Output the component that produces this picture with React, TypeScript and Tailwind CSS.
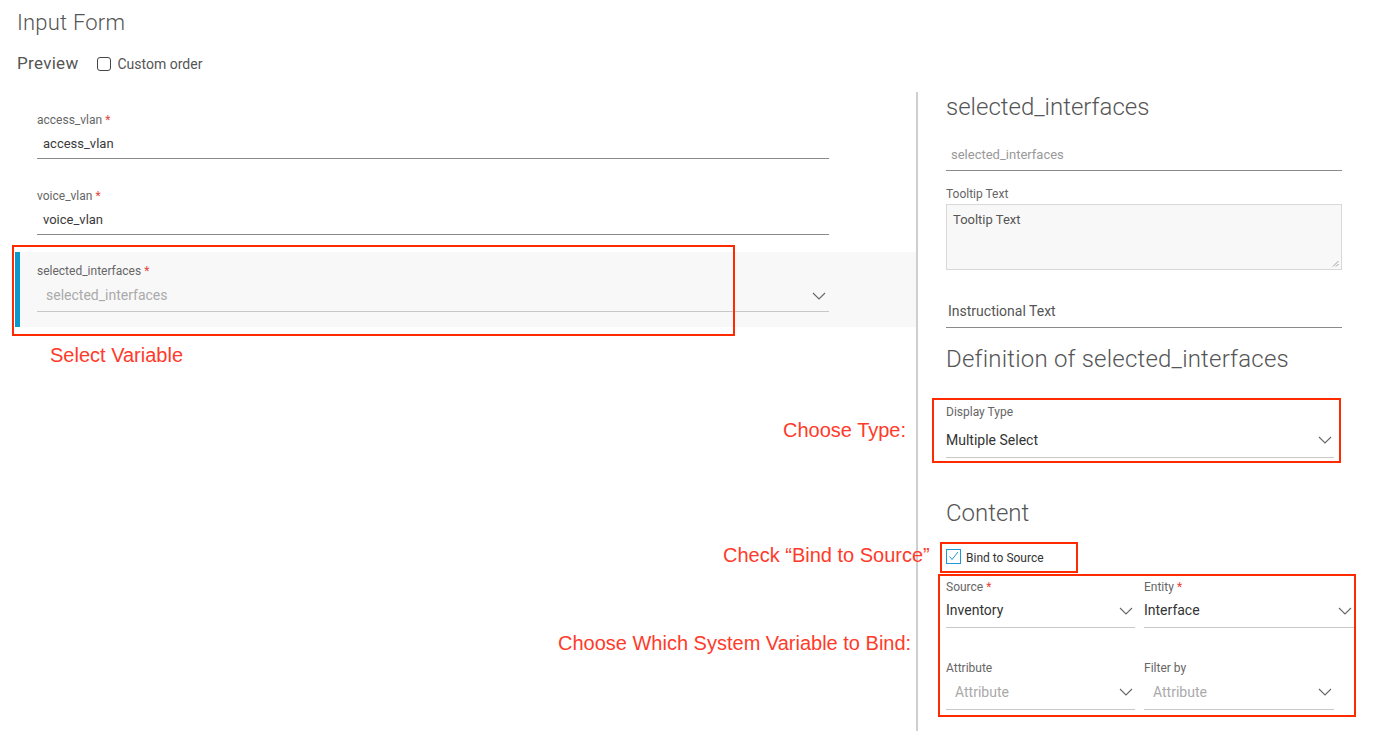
import React from "react";

const Chevron = () => (
  <svg width="14" height="8" viewBox="0 0 14 8" fill="none">
    <polyline points="1,1 7,7 13,1" stroke="#666" strokeWidth="1.1" />
  </svg>
);

const Req = () => <span className="text-[#e2453c] ml-[3px]">*</span>;

function LeftField({ label, value, placeholder, select, selected }: { label: string; value?: string; placeholder?: string; select?: boolean; selected?: boolean }) {
  return (
    <div className="flex pl-[15px]">
      <div className={`flex-1 flex ${selected ? "bg-[#f8f8f8]" : ""}`}>
        <div className={`w-[5px] ${selected ? "bg-[#0d98cc]" : ""}`} />
        <div className={`pl-[17px] pr-[87px] pt-[12px] flex-1 ${select ? "pb-[15px]" : "pb-[17px]"}`}>
          <div className="h-[14px] flex items-center text-[12px] text-[#666]">
            {label}
            <Req />
          </div>
          <div className={`mt-[2px] flex items-center justify-between border-b ${select ? "h-[32px] border-[#c8c8c8] pl-[9px]" : "h-[30px] border-[#8a8a8a] pl-[6px]"} pr-[3px]`}>
            <span className={value ? "text-[13px] text-[#3a3a3a]" : "text-[14px] text-[#aaa]"}>{value ?? placeholder}</span>
            {select && <Chevron />}
          </div>
        </div>
      </div>
    </div>
  );
}

function SelectField({ label, req, value, placeholder, width, box }: { label: string; req?: boolean; value?: string; placeholder?: string; width: string; box: string }) {
  return (
    <div className={width}>
      <div className="h-[14px] flex items-center text-[12px] text-[#666]">
        {label}
        {req && <Req />}
      </div>
      <div className={`${box} flex items-center justify-between border-b border-[#c8c8c8] pr-[2px] ${value ? "" : "pl-[9px]"}`}>
        <span className={`text-[14px] ${value ? "text-[#333]" : "text-[#aaa]"}`}>{value ?? placeholder}</span>
        <Chevron />
      </div>
    </div>
  );
}

const redFont = { fontFamily: "'Liberation Sans', Arial, sans-serif" };

export default function App() {
  return (
    <div className="relative w-[1383px] h-[731px] bg-white overflow-hidden" style={{ fontFamily: "Roboto, 'Liberation Sans', sans-serif" }}>
      {/* header */}
      <div className="pl-[17px]">
        <div className="pt-[8px] h-[36px] flex items-center text-[22px] tracking-[0.2px] font-light text-[#555]">Input Form</div>
        <div className="mt-[18px] h-[20px] flex items-center">
          <span className="text-[17px] tracking-[0.3px] text-[#555]">Preview</span>
          <span className="ml-[18px] w-[14px] h-[14px] rounded-[3px] border border-[#444]" />
          <span className="ml-[7px] text-[14px] text-[#555]">Custom order</span>
        </div>
      </div>

      <div className="flex mt-[18px] h-[639px]">
        {/* left */}
        <div className="w-[916px] pt-[9px]">
          <LeftField label="access_vlan" value="access_vlan" />
          <div className="h-[1px]" />
          <LeftField label="voice_vlan" value="voice_vlan" />
          <LeftField label="selected_interfaces" placeholder="selected_interfaces" select selected />
        </div>
        <div className="w-[2px] bg-[#cfcfcf]" />
        {/* right */}
        <div className="flex-1 pl-[28px]">
          <div className="mt-[1px] h-[28px] flex items-center text-[24px] font-light text-[#555]">selected_interfaces</div>
          <div className="mt-[19px] w-[396px] h-[31px] flex items-center border-b border-[#8a8a8a] pl-[5px]">
            <span className="text-[13px] text-[#999]">selected_interfaces</span>
          </div>
          <div className="mt-[16px] h-[14px] flex items-center text-[12px] text-[#666]">Tooltip Text</div>
          <div className="relative mt-[3px] w-[396px] h-[66px] bg-[#f8f8f8] border border-[#d8d8d8] px-[6px] pt-[5px] text-[13px] text-[#555]">
            Tooltip Text
            <svg className="absolute right-[2px] bottom-[2px]" width="7" height="7" viewBox="0 0 7 7">
              <line x1="1" y1="6.5" x2="6.5" y2="1" stroke="#888" strokeWidth="0.8" />
              <line x1="4" y1="6.5" x2="6.5" y2="4" stroke="#888" strokeWidth="0.8" />
            </svg>
          </div>
          <div className="mt-[26px] w-[396px] h-[32px] flex items-center border-b border-[#8a8a8a] pl-[2px]">
            <span className="text-[14px] text-[#555]">Instructional Text</span>
          </div>
          <div className="mt-[17px] h-[28px] flex items-center text-[24px] tracking-[0.2px] font-light text-[#555]">Definition of selected_interfaces</div>
          <div className="mt-[32px]">
            <SelectField label="Display Type" value="Multiple Select" width="w-[388px]" box="mt-[4px] h-[35px]" />
          </div>
          <div className="mt-[41px] h-[28px] flex items-center text-[24px] font-light text-[#555]">Content</div>
          <div className="mt-[22px] h-[14px] flex items-center">
            <span className="w-[15px] h-[15px] border border-[#1e9bd7] flex items-center justify-center">
              <svg width="11" height="10" viewBox="0 0 11 10" fill="none">
                <polyline points="1.5,5.5 4,8.5 10,1" stroke="#1e9bd7" strokeWidth="1" />
              </svg>
            </span>
            <span className="ml-[5px] pt-[4px] text-[12px] text-[#333]">Bind to Source</span>
          </div>
          <div className="mt-[17px] flex gap-[9px]">
            <SelectField label="Source" req value="Inventory" width="w-[189px]" box="h-[34px]" />
            <SelectField label="Entity" req value="Interface" width="w-[210px]" box="h-[34px]" />
          </div>
          <div className="mt-[33px] flex gap-[9px]">
            <SelectField label="Attribute" placeholder="Attribute" width="w-[189px]" box="h-[35px]" />
            <SelectField label="Filter by" placeholder="Attribute" width="w-[190px]" box="h-[35px]" />
          </div>
        </div>
      </div>

      {/* annotations */}
      <div className="absolute left-[12px] top-[245px] w-[723px] h-[91px] border-2 border-[#ff2a00]" />
      <div className="absolute left-[932px] top-[398px] w-[409px] h-[65px] border-2 border-[#ff2a00]" />
      <div className="absolute left-[940px] top-[542px] w-[138px] h-[31px] border-2 border-[#ff2a00]" />
      <div className="absolute left-[938px] top-[574px] w-[418px] h-[143px] border-2 border-[#ff2a00]" />

      <div className="absolute left-[50px] top-[343px] text-[20px] leading-[24px] text-[#ff3a2a]" style={redFont}>Select Variable</div>
      <div className="absolute left-[783px] top-[418px] text-[20px] leading-[24px] text-[#ff3a2a]" style={redFont}>Choose Type:</div>
      <div className="absolute left-[723px] top-[543px] text-[20px] leading-[24px] text-[#ff3a2a]" style={redFont}>Check “Bind to Source”</div>
      <div className="absolute left-[558px] top-[631px] text-[20px] leading-[24px] text-[#ff3a2a]" style={redFont}>Choose Which System Variable to Bind:</div>
    </div>
  );
}
